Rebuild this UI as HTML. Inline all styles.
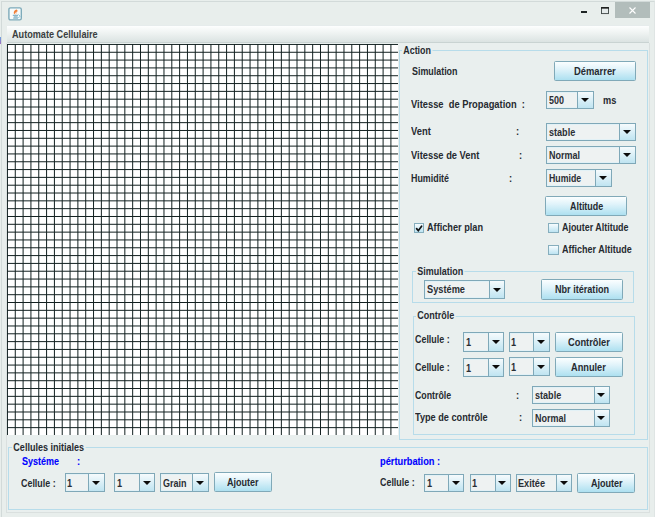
<!DOCTYPE html>
<html><head><meta charset="utf-8"><style>
html,body{margin:0;padding:0;}
body{width:658px;height:517px;position:relative;overflow:hidden;background:#ffffff;font-family:"Liberation Sans",sans-serif;}
#win{position:absolute;left:0;top:0;width:655px;height:517px;background:#e8eeec;}
#wb{position:absolute;left:1px;top:1px;width:654px;height:520px;border-left:1px solid #d2dad9;border-top:1px solid #d2dad9;border-right:1px solid #dfe5e4;box-sizing:border-box;}
.t{position:absolute;font-weight:bold;font-size:10.2px;line-height:12px;color:#262a30;white-space:pre;transform:scaleX(0.92);transform-origin:0 0;}
.tt{background:#e9efee;padding:0 1.5px;}
.blue{color:#0000ff;-webkit-text-stroke:0.1px #0000ff;}
.btn{position:absolute;box-sizing:border-box;border:1px solid #80a9b8;border-radius:1.5px;background:linear-gradient(#fbfeff,#e0f3fa 40%,#ade0f0);text-align:center;font-weight:bold;font-size:10.2px;color:#262a30;white-space:pre;}
.btn span{display:inline-block;transform:scaleX(0.92);}
.cb{position:absolute;box-sizing:border-box;border:1px solid #7fa8b8;background:#eef2f2;box-shadow:inset 0 0 0 1px #e2f1f6;}
.ct{position:absolute;left:1.8px;top:0;font-weight:bold;font-size:10.2px;color:#2a2e34;white-space:pre;transform:scaleX(0.9);transform-origin:0 0;}
.ab{position:absolute;right:0;top:0;bottom:0;box-sizing:border-box;border-left:1px solid #7fa8b8;background:linear-gradient(#f6fbfd,#bfe4f1);}
.ab i{position:absolute;left:50%;top:50%;margin-left:-4.2px;margin-top:-2px;width:0;height:0;border-left:4.2px solid transparent;border-right:4.2px solid transparent;border-top:4.4px solid #0c0c0c;}
.ck{position:absolute;box-sizing:border-box;border:1px solid #86aebd;background:linear-gradient(#f7fcfe,#bde4f2);}
.tb{position:absolute;box-sizing:border-box;border:1px solid #b7dcea;}
</style></head><body>
<div id="win"><div id="wb"></div></div>
<div style="position:absolute;left:0;top:37px;width:1.4px;height:7px;background:linear-gradient(#6aa0e0,#a070c0)"></div>

<svg style="position:absolute;left:8px;top:6.5px" width="14" height="14" viewBox="0 0 14 14">
<rect x="0.9" y="0.9" width="12.4" height="12" rx="1.6" fill="#f6fbfc" stroke="#7eabba" stroke-width="1.4"/>
<path d="M8.6 2.4 C6.2 3.2 5 5.2 6.4 7.4 C6.8 6 8.2 5.6 9.3 4.6 C9.9 3.9 9.5 3 8.6 2.4Z" fill="#ef7f3a"/>
<path d="M8.6 4.6 C7.8 5.6 8.6 6.6 7.6 7.4" stroke="#f6b08a" stroke-width="0.7" fill="none"/>
<path d="M4.8 8.3 H10 M5.8 9.9 H9.6 M5.2 11.1 H10" stroke="#5f9bb5" stroke-width="0.9"/>
<path d="M10.3 7.4 L12.1 9.2 L10.3 11" stroke="#7fbcd2" stroke-width="0.9" fill="none"/>
</svg>
<div style="position:absolute;left:580.5px;top:11.3px;width:6.2px;height:2.2px;background:#1e2424"></div>
<svg style="position:absolute;left:600px;top:6px" width="10" height="9"><rect x="1.5" y="1.6" width="7" height="6" fill="#e4eaea" stroke="#3d4545" stroke-width="0.9"/><path d="M1.1 1.9H8.9" stroke="#111" stroke-width="1.4"/></svg>
<div style="position:absolute;left:615px;top:2px;width:35px;height:15.7px;background:#b2bdbb"></div>
<svg style="position:absolute;left:629px;top:7px" width="7" height="7" viewBox="0 0 7 7"><path d="M0.5 0.5 L6.5 6.5 M6.5 0.5 L0.5 6.5" stroke="#fff" stroke-width="1.1"/></svg>
<div style="position:absolute;left:6.9px;top:25.4px;width:642.6px;height:17.6px;box-sizing:border-box;background:linear-gradient(#fdfefe,#f0f4f3 40%,#dbe3e2);border-bottom:1px solid #c9d3d2;border-top:1px solid #e6ecec"></div>
<div class="t" style="left:12.30px;top:28.77px;transform:scaleX(0.8947);color:#3a3e40;">Automate Cellulaire</div>
<div style="position:absolute;left:6.4px;top:43px;width:643.6px;height:469.6px;box-sizing:border-box;background:#e9efee;border:1px solid #dae0df;border-top:none"></div>
<svg style="position:absolute;left:7.1px;top:43.8px" width="391.30" height="391.00"><rect width="100%" height="100%" fill="#fff"/><path d="M0.45 0V391.00M8.28 0V391.00M16.10 0V391.00M23.93 0V391.00M31.75 0V391.00M39.58 0V391.00M47.41 0V391.00M55.23 0V391.00M63.06 0V391.00M70.88 0V391.00M78.71 0V391.00M86.54 0V391.00M94.36 0V391.00M102.19 0V391.00M110.01 0V391.00M117.84 0V391.00M125.67 0V391.00M133.49 0V391.00M141.32 0V391.00M149.14 0V391.00M156.97 0V391.00M164.80 0V391.00M172.62 0V391.00M180.45 0V391.00M188.27 0V391.00M196.10 0V391.00M203.93 0V391.00M211.75 0V391.00M219.58 0V391.00M227.40 0V391.00M235.23 0V391.00M243.06 0V391.00M250.88 0V391.00M258.71 0V391.00M266.53 0V391.00M274.36 0V391.00M282.19 0V391.00M290.01 0V391.00M297.84 0V391.00M305.66 0V391.00M313.49 0V391.00M321.32 0V391.00M329.14 0V391.00M336.97 0V391.00M344.79 0V391.00M352.62 0V391.00M360.45 0V391.00M368.27 0V391.00M376.10 0V391.00M383.92 0V391.00M0 0.45H391.30M0 8.27H391.30M0 16.09H391.30M0 23.91H391.30M0 31.73H391.30M0 39.55H391.30M0 47.37H391.30M0 55.19H391.30M0 63.01H391.30M0 70.83H391.30M0 78.65H391.30M0 86.47H391.30M0 94.29H391.30M0 102.11H391.30M0 109.93H391.30M0 117.75H391.30M0 125.57H391.30M0 133.39H391.30M0 141.21H391.30M0 149.03H391.30M0 156.85H391.30M0 164.67H391.30M0 172.49H391.30M0 180.31H391.30M0 188.13H391.30M0 195.95H391.30M0 203.77H391.30M0 211.59H391.30M0 219.41H391.30M0 227.23H391.30M0 235.05H391.30M0 242.87H391.30M0 250.69H391.30M0 258.51H391.30M0 266.33H391.30M0 274.15H391.30M0 281.97H391.30M0 289.79H391.30M0 297.61H391.30M0 305.43H391.30M0 313.25H391.30M0 321.07H391.30M0 328.89H391.30M0 336.71H391.30M0 344.53H391.30M0 352.35H391.30M0 360.17H391.30M0 367.99H391.30M0 375.81H391.30M0 383.63H391.30" stroke="#122020" stroke-width="1.0"/></svg>
<div class="tb" style="left:399.20px;top:50.20px;width:248.70px;height:389.70px"></div>
<div class="t tt" style="left:402.49px;top:44.87px;transform:scaleX(0.8707);">Action</div>
<div class="t" style="left:411.80px;top:66.07px;transform:scaleX(0.8737);">Simulation</div>
<div class="btn" style="left:554.10px;top:61.10px;width:81.60px;height:20.00px;line-height:18.00px"><span style="position:absolute;left:18.90px;top:1px;transform:scaleX(0.9219);transform-origin:0 0">Démarrer</span></div>
<div class="t" style="left:410.70px;top:99.07px;transform:scaleX(0.9164);">Vitesse  de Propagation  :</div>
<div class="cb" style="left:546.00px;top:91.00px;width:48.00px;height:18.30px"><span class="ct" style="line-height:18.30px;left:1.60px;transform:scaleX(0.8770);">500</span><div class="ab" style="width:15.70px"><i></i></div></div>
<div class="t" style="left:603.40px;top:94.77px;transform:scaleX(0.9032);">ms</div>
<div class="t" style="left:411.00px;top:126.47px;">Vent</div>
<div class="t" style="left:516.20px;top:126.47px;">:</div>
<div class="cb" style="left:546.10px;top:123.00px;width:89.60px;height:17.50px"><span class="ct" style="line-height:17.50px;left:1.60px;transform:scaleX(0.8899);">stable</span><div class="ab" style="width:15.40px"><i></i></div></div>
<div class="t" style="left:411.00px;top:149.87px;transform:scaleX(0.9166);">Vitesse de Vent</div>
<div class="t" style="left:518.80px;top:149.87px;">:</div>
<div class="cb" style="left:546.10px;top:146.10px;width:89.60px;height:17.60px"><span class="ct" style="line-height:17.60px;left:1.60px;transform:scaleX(0.8818);">Normal</span><div class="ab" style="width:15.40px"><i></i></div></div>
<div class="t" style="left:411.00px;top:172.67px;transform:scaleX(0.8721);">Humidité</div>
<div class="t" style="left:509.20px;top:172.67px;">:</div>
<div class="cb" style="left:546.00px;top:169.30px;width:65.50px;height:17.50px"><span class="ct" style="line-height:17.50px;left:1.60px;transform:scaleX(0.8596);">Humide</span><div class="ab" style="width:15.30px"><i></i></div></div>
<div class="btn" style="left:545.30px;top:196.10px;width:82.00px;height:20.20px;line-height:18.20px"><span style="position:absolute;left:23.25px;top:1px;transform:scaleX(0.8758);transform-origin:0 0">Altitude</span></div>
<div class="ck" style="left:413.90px;top:222.90px;width:10.00px;height:10.00px"></div>
<svg style="position:absolute;left:413.9px;top:222.9px" width="10" height="10"><path d="M2.6 5.6 L4.3 7.7 L7.6 3.2" stroke="#111" stroke-width="1.7" fill="none" stroke-linecap="round"/></svg>
<div class="t" style="left:426.90px;top:221.77px;transform:scaleX(0.8994);">Afficher plan</div>
<div class="ck" style="left:548.30px;top:222.70px;width:10.40px;height:10.40px"></div>
<div class="t" style="left:561.90px;top:221.97px;transform:scaleX(0.8744);">Ajouter Altitude</div>
<div class="ck" style="left:548.30px;top:244.60px;width:10.40px;height:10.40px"></div>
<div class="t" style="left:561.90px;top:244.27px;transform:scaleX(0.8835);">Afficher Altitude</div>
<div class="tb" style="left:412.30px;top:271.30px;width:222.20px;height:31.50px"></div>
<div class="t tt" style="left:416.48px;top:265.87px;transform:scaleX(0.8795);">Simulation</div>
<div class="cb" style="left:424.10px;top:280.40px;width:80.90px;height:18.80px"><span class="ct" style="line-height:18.80px;left:1.60px;transform:scaleX(0.9067);">Systéme</span><div class="ab" style="width:15.20px"><i></i></div></div>
<div class="btn" style="left:540.90px;top:279.20px;width:81.70px;height:20.60px;line-height:18.60px"><span style="position:absolute;left:12.95px;top:1px;transform:scaleX(0.8916);transform-origin:0 0">Nbr itération</span></div>
<div class="tb" style="left:412.70px;top:315.90px;width:222.10px;height:118.70px"></div>
<div class="t tt" style="left:415.57px;top:309.97px;transform:scaleX(0.8836);">Contrôle</div>
<div class="t" style="left:415.00px;top:333.67px;transform:scaleX(0.8743);">Cellule :</div>
<div class="cb" style="left:463.40px;top:332.40px;width:40.50px;height:19.50px"><span class="ct" style="line-height:19.50px;">1</span><div class="ab" style="width:15.40px"><i></i></div></div>
<div class="cb" style="left:508.50px;top:332.30px;width:41.50px;height:19.60px"><span class="ct" style="line-height:19.60px;">1</span><div class="ab" style="width:16.00px"><i></i></div></div>
<div class="btn" style="left:554.90px;top:332.30px;width:67.90px;height:19.60px;line-height:17.60px"><span style="position:absolute;left:12.00px;top:1px;transform:scaleX(0.9133);transform-origin:0 0">Contrôler</span></div>
<div class="t" style="left:415.00px;top:361.97px;transform:scaleX(0.8743);">Cellule :</div>
<div class="cb" style="left:463.40px;top:357.50px;width:40.50px;height:19.00px"><span class="ct" style="line-height:19.00px;">1</span><div class="ab" style="width:15.40px"><i></i></div></div>
<div class="cb" style="left:508.50px;top:357.30px;width:41.50px;height:19.20px"><span class="ct" style="line-height:19.20px;">1</span><div class="ab" style="width:16.00px"><i></i></div></div>
<div class="btn" style="left:554.90px;top:357.20px;width:67.90px;height:19.80px;line-height:17.80px"><span style="position:absolute;left:15.55px;top:1px;transform:scaleX(0.9034);transform-origin:0 0">Annuler</span></div>
<div class="t" style="left:415.00px;top:389.87px;transform:scaleX(0.8647);">Contrôle</div>
<div class="t" style="left:515.80px;top:389.87px;">:</div>
<div class="cb" style="left:532.00px;top:386.30px;width:77.80px;height:17.80px"><span class="ct" style="line-height:17.80px;left:1.60px;transform:scaleX(0.8899);">stable</span><div class="ab" style="width:15.30px"><i></i></div></div>
<div class="t" style="left:415.00px;top:412.27px;transform:scaleX(0.9002);">Type de contrôle</div>
<div class="t" style="left:519.00px;top:412.27px;">:</div>
<div class="cb" style="left:532.00px;top:409.40px;width:77.80px;height:17.20px"><span class="ct" style="line-height:17.20px;left:1.60px;transform:scaleX(0.8818);">Normal</span><div class="ab" style="width:15.30px"><i></i></div></div>
<div class="tb" style="left:8.40px;top:447.10px;width:639.40px;height:62.80px"></div>
<div class="t tt" style="left:12.37px;top:441.67px;transform:scaleX(0.8869);">Cellules initiales</div>
<div class="t blue" style="left:21.50px;top:456.27px;transform:scaleX(0.8806);">Systéme</div>
<div class="t blue" style="left:77.00px;top:456.27px;">:</div>
<div class="t" style="left:21.00px;top:477.77px;transform:scaleX(0.8743);">Cellule :</div>
<div class="cb" style="left:64.70px;top:473.40px;width:40.20px;height:19.00px"><span class="ct" style="line-height:19.00px;">1</span><div class="ab" style="width:15.50px"><i></i></div></div>
<div class="cb" style="left:114.20px;top:473.10px;width:41.30px;height:19.20px"><span class="ct" style="line-height:19.20px;">1</span><div class="ab" style="width:15.00px"><i></i></div></div>
<div class="cb" style="left:160.20px;top:473.10px;width:48.40px;height:19.20px"><span class="ct" style="line-height:19.20px;left:1.60px;transform:scaleX(0.8831);">Grain</span><div class="ab" style="width:15.10px"><i></i></div></div>
<div class="btn" style="left:213.50px;top:472.30px;width:58.30px;height:20.00px;line-height:18.00px"><span style="position:absolute;left:12.35px;top:1px;transform:scaleX(0.8854);transform-origin:0 0">Ajouter</span></div>
<div class="t blue" style="left:380.30px;top:455.97px;transform:scaleX(0.9085);">pérturbation :</div>
<div class="t" style="left:380.30px;top:477.07px;transform:scaleX(0.8743);">Cellule :</div>
<div class="cb" style="left:424.30px;top:473.60px;width:40.10px;height:18.80px"><span class="ct" style="line-height:18.80px;">1</span><div class="ab" style="width:15.00px"><i></i></div></div>
<div class="cb" style="left:469.50px;top:473.70px;width:41.00px;height:18.50px"><span class="ct" style="line-height:18.50px;">1</span><div class="ab" style="width:15.00px"><i></i></div></div>
<div class="cb" style="left:515.70px;top:473.70px;width:56.50px;height:18.50px"><span class="ct" style="line-height:18.50px;left:1.60px;transform:scaleX(0.8995);">Exitée</span><div class="ab" style="width:15.00px"><i></i></div></div>
<div class="btn" style="left:577.30px;top:472.50px;width:58.10px;height:20.20px;line-height:18.20px"><span style="position:absolute;left:12.25px;top:1px;transform:scaleX(0.8854);transform-origin:0 0">Ajouter</span></div>
</body></html>
